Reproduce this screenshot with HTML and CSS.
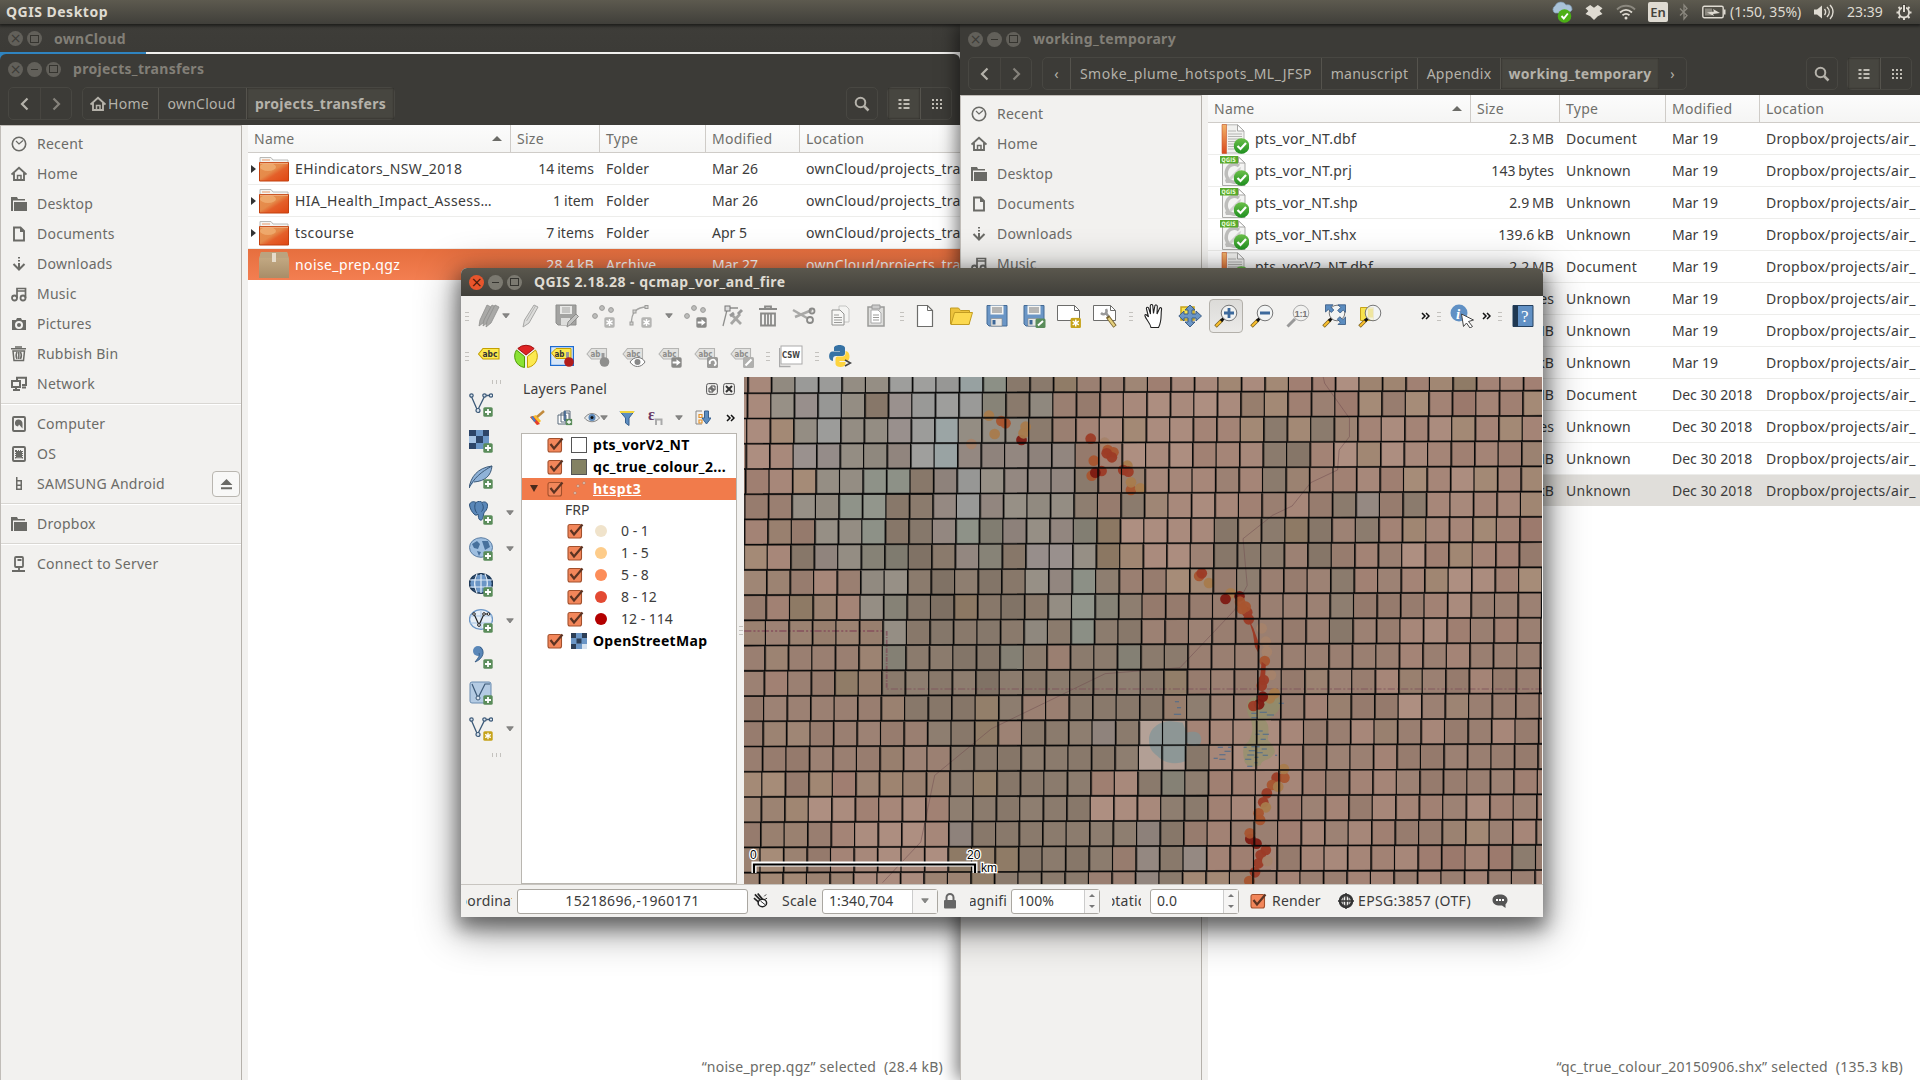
FILE: index.html
```html
<!DOCTYPE html>
<html lang="en">
<head>
<meta charset="utf-8">
<title>QGIS Desktop</title>
<link rel="stylesheet" href="styles.css">
</head>
<body>
<svg class="defs" width="0" height="0">
<defs>
<linearGradient id="gFolder" x1="0" y1="0" x2="1" y2="1"><stop offset="0" stop-color="#e8904f"/><stop offset=".45" stop-color="#e58a4a"/><stop offset=".6" stop-color="#e4602a"/><stop offset="1" stop-color="#e04612"/></linearGradient>
<linearGradient id="gBox" x1="0" y1="0" x2="0" y2="1"><stop offset="0" stop-color="#c9b08a"/><stop offset="1" stop-color="#a88d68"/></linearGradient>
<linearGradient id="gOk" x1="0" y1="0" x2="0" y2="1"><stop offset="0" stop-color="#6cc04a"/><stop offset="1" stop-color="#1d8f1f"/></linearGradient>
<linearGradient id="gOr" x1="0" y1="0" x2="0" y2="1"><stop offset="0" stop-color="#f2b56b"/><stop offset="1" stop-color="#d9481c"/></linearGradient>
<symbol id="recent" viewBox="0 0 16 16"><circle cx="8" cy="8" r="6.7" fill="none" stroke="#6a6a66" stroke-width="1.6"/><path d="M5 5l3 3 4-3.500" fill="none" stroke="#6a6a66" stroke-width="1.2"/></symbol>
<symbol id="home" viewBox="0 0 16 16"><path d="M.5 8.500L8 1.800l7.500 6.700M3 7v7h10V7" fill="none" stroke="currentColor" stroke-width="1.9"/><path d="M6.500 14V9.500h3.500V14" fill="none" stroke="currentColor" stroke-width="1.500"/></symbol>
<symbol id="desktop" viewBox="0 0 16 16"><path d="M0 1h6l1 2h7v1.500H2V15H0z" fill="#6a6a66"/><path d="M3 6h13v9H3z" fill="#6a6a66"/></symbol>
<symbol id="docs" viewBox="0 0 16 16"><path d="M3 1.500h6.500L13 5v9.500H3z" fill="none" stroke="#6a6a66" stroke-width="1.900"/><path d="M9 1v5h5z" fill="#6a6a66"/></symbol>
<symbol id="down" viewBox="0 0 16 16"><path d="M8 1v1.500M8 4v1.500M8 7v6M2.500 8L8 13.500 13.500 8" fill="none" stroke="#6a6a66" stroke-width="2"/></symbol>
<symbol id="music" viewBox="0 0 16 16"><path d="M6 12V2.500h8.500V12M6 5h8" fill="none" stroke="#6a6a66" stroke-width="1.700"/><circle cx="3.500" cy="12" r="2.500" fill="none" stroke="#6a6a66" stroke-width="1.800"/><circle cx="12" cy="12" r="2.500" fill="none" stroke="#6a6a66" stroke-width="1.800"/></symbol>
<symbol id="pics" viewBox="0 0 16 16"><path fill-rule="evenodd" d="M1 4h4l1-2h4l1 2h4v10H1zM8 5a4 4 0 100 8 4 4 0 000-8z" fill="#6a6a66"/><circle cx="8" cy="9" r="2" fill="#6a6a66"/></symbol>
<symbol id="bin" viewBox="0 0 16 16"><path d="M0 2.800h15M4 1h7M2 5h11.500l-1 9.500H3zM6 6c-1 2-1 5 0 7M9.500 6c1 2 1 5 0 7M7.800 6v7" fill="none" stroke="#6a6a66" stroke-width="1.500"/></symbol>
<symbol id="net" viewBox="0 0 16 16"><path d="M1 5h8v6H1zM6 4V1.800h9V9h-4M2 14h7M5 11v3M11 11.500h4" fill="none" stroke="#6a6a66" stroke-width="2"/></symbol>
<symbol id="disk" viewBox="0 0 16 16"><rect x="2" y="1" width="12" height="14" rx="1" fill="none" stroke="#6a6a66" stroke-width="1.900"/><path d="M8 3.500a3.500 3.500 0 00-1 7l1-2 3.500 4V8A4 4 0 008 3.500z" fill="#6a6a66"/></symbol>
<symbol id="chip" viewBox="0 0 16 16"><rect x="2" y="1" width="12" height="14" rx="1" fill="none" stroke="#6a6a66" stroke-width="1.900"/><rect x="5" y="5" width="6" height="6.500" fill="#6a6a66" stroke="#6a6a66" stroke-dasharray="1 1" stroke-width="2"/></symbol>
<symbol id="phone" viewBox="0 0 16 16"><path fill-rule="evenodd" d="M5 1h1.500v3H11v10H5zM6.500 5.500v3h3v-3zM6.500 10v2.500h3V10z" fill="#6a6a66"/></symbol>
<symbol id="server" viewBox="0 0 16 16"><rect x="4" y="1" width="8" height="10" rx="1" fill="none" stroke="#6a6a66" stroke-width="1.800"/><path d="M6.500 4h4M8 11v4M1 15h13" stroke="#6a6a66" stroke-width="1.800"/></symbol>
<symbol id="search" viewBox="0 0 16 16"><circle cx="6.500" cy="6.500" r="4.800" fill="none" stroke="#b5b2aa" stroke-width="2"/><path d="M10 10l4.500 4.500" stroke="#b5b2aa" stroke-width="2.500"/></symbol>
<symbol id="list" viewBox="0 0 16 16"><path d="M2.500 4h3M7.500 4h6M2.500 8h3M7.500 8h6M2.500 12h3M7.500 12h6" stroke="#c0bdb5" stroke-width="2"/></symbol>
<symbol id="grid" viewBox="0 0 16 16"><path d="M3 4h2M7 4h2M11 4h2M3 8h2M7 8h2M11 8h2M3 12h2M7 12h2M11 12h2" stroke="#c0bdb5" stroke-width="2"/></symbol>
<symbol id="left" viewBox="0 0 16 16"><path d="M10.500 2.500L5 8l5.500 5.500" fill="none" stroke="currentColor" stroke-width="2.200"/></symbol>
<symbol id="right" viewBox="0 0 16 16"><path d="M5.500 2.500L11 8l-5.500 5.500" fill="none" stroke="currentColor" stroke-width="2.200"/></symbol>
<symbol id="folder" viewBox="0 0 30 26"><path d="M1 12V1.500h11l2 2.500h15v8" fill="#f4f4f2" stroke="#b9b9b6"/><path d="M3 4h8" stroke="#e89a6a"/><path d="M.5 6.500h29v18.500H.5z" fill="url(#gFolder)" stroke="#c2410f"/><ellipse cx="9" cy="11" rx="8" ry="4" fill="#fbdca6" opacity=".35"/><path d="M1 7.300h28" stroke="#f0b184"/></symbol>
<symbol id="archive" viewBox="0 0 30 28"><path d="M2 1h26l2 7v19H0V8z" fill="url(#gBox)"/><path d="M2 1h26l1.500 6H.5z" fill="#bba37f"/><path d="M13 2h4v9h-4z" fill="#e6dccb"/></symbol>
<symbol id="okdot" viewBox="0 0 16 16"><circle cx="8" cy="8" r="7.800" fill="url(#gOk)"/><path d="M4 8l3 3 5.500-6" fill="none" stroke="#fff" stroke-width="2.200"/></symbol>
<symbol id="dbf" viewBox="0 0 30 30"><path d="M3.500.8h15L25 7v22H3.500z" fill="#f1f1ef" stroke="#b5b5b3"/><path d="M18.500.8V7H25z" fill="#fff" stroke="#a5a5a3"/><path d="M3 .5h4.500v29H3z" fill="url(#gOr)" stroke="#c9562b" stroke-width=".6"/><path d="M9 7h8M9 10h14M9 12.500h14M9 15h14M9 17.500h12M9 20h8M9 22.500h6M9 25h6" stroke="#b4b4b2"/><use href="#okdot" x="14.500" y="14" width="16" height="16"/></symbol>
<symbol id="qfile" viewBox="0 0 30 30"><path d="M3.500 1h16L26 7v22.500H3.500z" fill="#f4f4f3" stroke="#a9a9a7"/><path d="M19.500 1v6H26z" fill="#fff" stroke="#a5a5a3"/><path d="M20 10a8 9 0 10-3 16" fill="none" stroke="#bdbdbb" stroke-width="3.500"/><path d="M10 22l10-10 2-1-1 4-9 9z" fill="#d2d2d0"/><path d="M6 24l3-3 1 4 2 2H7z" fill="#bdbdbb"/><rect x="1" y="0" width="18" height="7.500" fill="#58a82c"/><text x="2.500" y="6" font-size="6.200" font-weight="700" fill="#eaffdd" font-family="DejaVu Sans,sans-serif" textLength="14.500" lengthAdjust="spacingAndGlyphs">QGIS</text><use href="#okdot" x="14.500" y="14" width="16" height="16"/></symbol>
<symbol id="plus" viewBox="0 0 10 10"><rect x=".3" y=".3" width="9.400" height="9.400" rx="1.500" fill="#5a8c5a"/><path d="M5 2v6M2 5h6" stroke="#fff" stroke-width="1.800"/></symbol>
<symbol id="star" viewBox="0 0 10 10"><rect x=".3" y=".3" width="9.400" height="9.400" rx="1.500" fill="currentColor"/><path d="M5 1.800v6.400M2.200 3.400l5.600 3.200M7.800 3.400L2.200 6.600" stroke="#fff" stroke-width="1.300"/></symbol>
<symbol id="garrow" viewBox="0 0 10 10"><rect x=".3" y=".3" width="9.400" height="9.400" rx="1.500" fill="#8a8a88"/><path d="M1.500 5h4" stroke="#fff" stroke-width="2"/><path d="M5 2l3.700 3L5 8z" fill="#fff"/></symbol>
<symbol id="pencils" viewBox="0 0 24 24"><g fill="#a9a9a7" stroke="#8f8f8d" stroke-width=".8"><path d="M2 22l1-6L10 1l4 2L6 19z"/><path d="M6 22l1-6L15 1l4 2-9 16z"/><path d="M9 23l1-6L18 1l4 2-8 16z"/></g></symbol>
<symbol id="pencil" viewBox="0 0 24 24"><path d="M4 23l1.500-7L15 1l4 2-9 16z" fill="#dcdcda" stroke="#a6a6a4"/><path d="M7.500 17L16.500 2" stroke="#b5b5b3"/></symbol>
<symbol id="saveg" viewBox="0 0 24 24"><path d="M1 1h20v20H3l-2-2z" fill="#a3a3a1" stroke="#8d8d8b"/><path d="M5 2h12v8H5z" fill="#e8e8e6"/><path d="M7 4h8M7 6h8M7 8h8" stroke="#a3a3a1"/><path d="M6 14h9v7H6z" fill="#dededc"/><path d="M12 23l1-5 8-8 2.500 2.500-8 8z" fill="#c4c4c2" stroke="#8d8d8b"/></symbol>
<symbol id="dots" viewBox="0 0 24 24"><g fill="#bdbdbb" stroke="#9b9b99"><circle cx="3" cy="12" r="2.400"/><circle cx="10" cy="4" r="2.400"/><circle cx="19" cy="6" r="2.400"/></g><use href="#star" x="12" y="13" width="11" height="11" color="#b5b5b3"/></symbol>
<symbol id="curve" viewBox="0 0 24 24"><path d="M2.500 20C2 8 8 3 18 3" fill="none" stroke="#a5a5a3" stroke-width="1.300"/><g fill="#d5d5d3" stroke="#9b9b99"><rect x="1" y="18" width="3" height="3"/><rect x="4" y="6" width="3" height="3"/><rect x="16" y="1.500" width="3" height="3"/></g><use href="#star" x="12" y="13" width="11" height="11" color="#b5b5b3"/></symbol>
<symbol id="dotsm" viewBox="0 0 24 24"><g fill="#bdbdbb" stroke="#9b9b99"><circle cx="3" cy="12" r="2.400"/><circle cx="10" cy="4" r="2.400"/><circle cx="19" cy="6" r="2.400"/></g><use href="#garrow" x="12" y="13" width="11" height="11"/></symbol>
<symbol id="node" viewBox="0 0 24 24"><path d="M2 22L6 6M7 4h10" stroke="#8f8f8d" stroke-width="1.300"/><rect x="4" y="2" width="5" height="5" fill="#ddd" stroke="#777"/><path d="M10 20l9-10M11 11l9 9" stroke="#a6a6a4" stroke-width="2.800"/><path d="M17 10l4-4M9 12l4-3" stroke="#999" stroke-width="3"/></symbol>
<symbol id="trash" viewBox="0 0 24 24"><path d="M3 5h18M9 4V2.500h6V4M5 9.500h14v12H5zM9 10v11M12 10v11M15 10v11" fill="none" stroke="#8a8a88" stroke-width="1.800"/></symbol>
<symbol id="cut" viewBox="0 0 24 24"><path d="M1 6l14 8M3 13L20 6" stroke="#a9a9a7" stroke-width="2.500"/><circle cx="20" cy="7" r="2.500" fill="none" stroke="#8a8a88" stroke-width="1.800"/><circle cx="18" cy="16" r="3" fill="none" stroke="#8a8a88" stroke-width="1.800"/></symbol>
<symbol id="copy" viewBox="0 0 24 24"><path d="M11 2h7l3 3v13h-10z" fill="#f4f4f2" stroke="#c4c4c2"/><path d="M4 6h8l4 4v11H4z" fill="#f7f7f5" stroke="#929290"/><path d="M6 11h5M6 13.500h8M6 16h8M6 18.500h8" stroke="#9a9a98"/></symbol>
<symbol id="paste" viewBox="0 0 24 24"><path d="M4 3h16v19H4z" fill="#dededc" stroke="#9b9b99" stroke-width="1.500"/><path d="M8 1h8v4H8z" fill="#ccc" stroke="#999"/><path d="M7 6h7l3 3v10H7z" fill="#fff" stroke="#aaa"/><path d="M9 11h6M9 13.500h6M9 16h6" stroke="#9a9a98"/></symbol>
<symbol id="new" viewBox="0 0 24 24"><path d="M4.500 1.500h10l5 5v16h-15z" fill="#fff" stroke="#6d6d6b" stroke-width="1.200"/><path d="M14.500 1.500v5h5" fill="none" stroke="#6d6d6b"/></symbol>
<symbol id="open" viewBox="0 0 24 24"><path d="M1.500 20V4h8l2 2.500h9V20z" fill="#edc33c" stroke="#c29c22"/><path d="M2 20.500L5.500 8.500h18L20 20.500z" fill="#fcd94f" stroke="#c29c22"/></symbol>
<symbol id="save" viewBox="0 0 24 24"><path d="M2 1.500h20v20.500H4l-2-2z" fill="#6b96c6" stroke="#456b94"/><path d="M5.500 1.500h13v9h-13z" fill="#f5f5f3"/><path d="M7 4h10M7 6h10M7 8h10" stroke="#777"/><path d="M6 14.500h11V22H6z" fill="#e8e8e6" stroke="#888" stroke-width=".6"/><path d="M7.500 16h3v4.500h-3z" fill="#3d6696"/></symbol>
<symbol id="saveas" viewBox="0 0 24 24"><use href="#save" width="24" height="24"/><rect x="13.500" y="14.500" width="10" height="9.500" rx="1.500" fill="#5a8c5a"/><path d="M16 21.500l5-4.500" stroke="#fff" stroke-width="2"/></symbol>
<symbol id="layout" viewBox="0 0 24 24"><path d="M.5 1.500h17l5 5v10H.5z" fill="#fff" stroke="#6d6d6b"/><path d="M17.500 1.500v5h5" fill="none" stroke="#6d6d6b"/><use href="#star" x="13" y="13.500" width="11.500" height="11" color="#c6a31a"/></symbol>
<symbol id="wrench" viewBox="0 0 24 24"><path d="M.5 1.500h17l5 5v10H.5z" fill="#fff" stroke="#6d6d6b"/><path d="M17.500 1.500v5h5" fill="none" stroke="#6d6d6b"/><path d="M8 9c3 3 7 0 5-4M13 9l2.500 3.500" fill="none" stroke="#999" stroke-width="2.500"/><path d="M14.500 12.500l7.500 10" stroke="#77632f" stroke-width="4"/><path d="M15.500 14l6 8" stroke="#e5cf7c" stroke-width="2.400"/></symbol>
<symbol id="hand" viewBox="0 0 24 24"><path d="M9 23.500c-1-5-5-8-6-11.500-.5-2 1.500-2 3.500 1L4.500 5c-.5-2 1.800-2.500 2.300-.5L8.500 10 8.300 2c0-2 2.500-2 2.500 0l.7 7.500L12.800 2.200c.3-2 2.700-1.500 2.500.5L15 10l2.500-5.500c.8-1.500 2.500-.8 2 1.200-.8 5 .5 12-3 17.800z" fill="#fff" stroke="#222" stroke-width="1.100"/></symbol>
<symbol id="pan" viewBox="0 0 24 24"><path d="M3 3h13v13H3z" fill="#fbe34c" stroke="#c6a31a" stroke-width="1.500"/><path d="M12 1l5 5h-3v4h4V7l5.500 5-5.500 5v-3h-4v4h3l-5 5-5-5h3v-4H6v3L.8 12 6 7v3h4V6H7z" fill="#6b96c6" stroke="#33557d" stroke-width=".9"/></symbol>
<symbol id="lens" viewBox="0 0 24 24"><path d="M1.500 22.500L8 16" stroke="#7d6420" stroke-width="3.600"/><path d="M2 22l5-5" stroke="#fbc02d" stroke-width="2"/><path d="M7 17l3-3" stroke="#111" stroke-width="3"/><circle cx="15" cy="9" r="7.800" fill="#f2f4f4" fill-opacity=".85" stroke="#777"/></symbol>
<symbol id="zin" viewBox="0 0 24 24"><use href="#lens" width="24" height="24"/><path d="M15 4v10M10 9h10" stroke="#3c699c" stroke-width="2.800"/></symbol>
<symbol id="zout" viewBox="0 0 24 24"><use href="#lens" width="24" height="24"/><path d="M10 9h10" stroke="#3c699c" stroke-width="2.800"/></symbol>
<symbol id="z11" viewBox="0 0 24 24"><path d="M1.500 22.500L9 15" stroke="#999" stroke-width="3"/><circle cx="15" cy="9" r="7.800" fill="#f1f1ef" stroke="#aaa"/><text x="8.500" y="12.500" font-size="9.500" font-weight="700" fill="#777" font-family="Liberation Sans,sans-serif" textLength="13">1:1</text></symbol>
<symbol id="zfull" viewBox="0 0 24 24"><use href="#lens" width="24" height="24"/><g fill="#5c8dc0" stroke="#33557d" stroke-width=".8"><path d="M3.500.800h7.500L8.800 3l3 3-2.500 2.500-3-3L3.500 8zM23.500.800v7.500L21.200 6l-3 3-2.500-2.500 3-3L16 .800zM23.500 20.500H16l2.300-2.300-3-3 2.500-2.500 3 3 2.700-2.700z"/></g></symbol>
<symbol id="zsel" viewBox="0 0 24 24"><path d="M2.500 3.500h13v13h-13z" fill="#f7e34c" stroke="#c6a31a"/><use href="#lens" width="24" height="24"/><path d="M10 4.500h5v9h-5z" fill="#efe6a0"/></symbol>
<symbol id="info" viewBox="0 0 24 24"><circle cx="9" cy="9" r="8.500" fill="#6090c4"/><text x="6" y="14.500" font-size="15" font-weight="700" font-style="italic" fill="#fff" font-family="Liberation Serif,serif">i</text><path d="M11.500 10l12 6-5 1.500 4 5-2.500 1.500-3.500-5-3 3.500z" fill="#fff" stroke="#444"/></symbol>
<symbol id="help" viewBox="0 0 24 24"><path d="M2 1.500h20v21H2z" fill="#6190c4" stroke="#25405f"/><path d="M2 1.500h5v21H2z" fill="#1f3852"/><text x="10" y="18" font-size="17" fill="#fff" font-family="Liberation Serif,serif">?</text></symbol>
<symbol id="tag" viewBox="0 0 24 24"><path d="M1.500 10L6 4.500h16v10.500H6z" fill="#fce94f" stroke="#c4a000" stroke-width="1.100"/><text x="5.500" y="13" font-size="9" font-weight="700" fill="#333" font-family="DejaVu Sans,sans-serif" textLength="15" lengthAdjust="spacingAndGlyphs">abc</text></symbol>
<symbol id="tagg" viewBox="0 0 24 24"><path d="M1 10l4.500-5.500h15v10.500h-15z" fill="#e2e2e0" stroke="#b5b5b3" stroke-width="1.100"/><text x="4.500" y="13" font-size="9" font-weight="700" fill="#8d8d8b" font-family="DejaVu Sans,sans-serif" textLength="14" lengthAdjust="spacingAndGlyphs">abc</text></symbol>
<symbol id="pie" viewBox="0 0 24 24"><path d="M12 11L3.800 4.500a12 12 0 0116.400 0z" fill="#e02424" stroke="#a01010"/><path d="M10.500 12.500v11C1 22-1.500 12 2.500 6z" fill="#8ae234" stroke="#4e9a06"/><path d="M13.500 12.500v11C23 22 25.500 12 21.500 6z" fill="#fce94f" stroke="#c4a000"/></symbol>
<symbol id="tagpin" viewBox="0 0 24 24"><rect x=".6" y="2.600" width="22.800" height="18.800" fill="#d7e6f7" stroke="#1c6bd0" stroke-width="1.200"/><path d="M1.500 9L6 4.500h15v10H6z" fill="#fce94f" stroke="#c4a000"/><text x="4.500" y="12.500" font-size="9" font-weight="700" fill="#333" font-family="DejaVu Sans,sans-serif" textLength="10" lengthAdjust="spacingAndGlyphs">ab</text><path d="M17.500 8v8" stroke="#999" stroke-width="3"/><circle cx="19" cy="18" r="4.800" fill="#b11c1c"/></symbol>
<symbol id="tag2" viewBox="0 0 24 24"><path d="M1 10l4.500-5.500h15v10.500h-15z" fill="#e2e2e0" stroke="#b5b5b3" stroke-width="1.100"/><text x="4.500" y="13" font-size="9" font-weight="700" fill="#8d8d8b" font-family="DejaVu Sans,sans-serif" textLength="10" lengthAdjust="spacingAndGlyphs">ab</text><path d="M17 9v8" stroke="#999" stroke-width="3"/><circle cx="18.500" cy="18" r="4.800" fill="#8f8f8d"/></symbol>
<symbol id="tag3" viewBox="0 0 24 24"><use href="#tagg" width="24" height="24"/><path d="M8 18c4-6 12-6 15 0-4 6-11 6-15 0z" fill="#fff" stroke="#777"/><circle cx="15.500" cy="18" r="3" fill="#888"/></symbol>
<symbol id="tag4" viewBox="0 0 24 24"><use href="#tagg" width="24" height="24"/><use href="#garrow" x="13" y="13" width="11" height="11"/></symbol>
<symbol id="tag5" viewBox="0 0 24 24"><use href="#tagg" width="24" height="24"/><rect x="13" y="13" width="11" height="11" rx="1.500" fill="#9a9a98"/><path d="M16 20a3 3 0 114 1.500" fill="none" stroke="#fff" stroke-width="1.800"/></symbol>
<symbol id="tag6" viewBox="0 0 24 24"><use href="#tagg" width="24" height="24"/><rect x="13" y="13" width="11" height="11" rx="1.500" fill="#b0b0ae"/><path d="M15.500 21.500l6-6" stroke="#fff" stroke-width="2.200"/></symbol>
<symbol id="csw" viewBox="0 0 24 24"><path d="M.5 4v18.500h11" fill="none" stroke="#aaa" stroke-width="1.400"/><rect x="2" y="2" width="21" height="18" fill="#fff" stroke="#aaa"/><text x="3" y="14" font-size="9" font-weight="700" fill="#444" font-family="DejaVu Sans,sans-serif" textLength="18" lengthAdjust="spacingAndGlyphs">CSW</text></symbol>
<symbol id="python" viewBox="0 0 24 24"><path d="M6 7V4c0-4 11-4 11 0v5c0 2-1 3-3 3H8c-2 0-3 1-3 3v2c-5 0-5-9-1-9.500h8V7z" fill="#3672a4"/><path d="M17.500 7c5 0 5 9 2 10h-8v1h6v2c0 4-10 4-10 0v-5c0-2 1-2.500 3-2.500h4c2 0 3-1.500 3-3.500z" fill="#fdd43f"/><path d="M17 16l5.500 3-5.500 3" fill="none" stroke="#444" stroke-width="1.500"/></symbol>
<symbol id="vec" viewBox="0 0 24 24"><path d="M2 2.500l6.500 15L16 2.500h6" fill="none" stroke="#3d5a78" stroke-width="1.300"/><g fill="#dce6f0" stroke="#3d5a78" stroke-width="1.200"><circle cx="2.500" cy="2.500" r="1.700"/><circle cx="15.500" cy="2.500" r="1.700"/><circle cx="22" cy="2.500" r="1.700"/><circle cx="9" cy="17.500" r="2"/></g></symbol>
<symbol id="v1" viewBox="0 0 24 24"><use href="#vec" width="24" height="24"/><use href="#plus" x="14" y="14" width="10" height="10"/></symbol>
<symbol id="v2" viewBox="0 0 24 24"><path d="M0 1h20v19H0z" fill="#6b96c6"/><path d="M0 1h7v6H0zM14 1h6v6h-6zM7 7h7v7H7zM0 14h7v6H0z" fill="#2c4568"/><path d="M0 7h7v7H0z" fill="#a8c5e4"/><use href="#plus" x="14" y="14" width="10" height="10"/></symbol>
<symbol id="v3" viewBox="0 0 24 24"><path d="M0 23C2 12 8 3 23 1c-1 10-7 15-18 16" fill="#8fb2d8" stroke="#3d5a78"/><path d="M0 23C5 13 12 7 23 1" fill="none" stroke="#3d5a78"/><use href="#plus" x="14" y="14" width="10" height="10"/></symbol>
<symbol id="v4" viewBox="0 0 24 24"><path d="M.5 4C1 .5 5 0 7 1.500 9 0 12 0 13 1.500c3-1.500 6 0 5.500 4-.5 3-2 5-3.500 6l-1 5c-.5 3.500-4 3.500-4.500 0L9 13c-1 1.500-3 1.500-4 0C3 11 1 8 .5 4z" fill="#5a87b8" stroke="#2d527a"/><path d="M6.500 2c-1.500 4-.5 8 1.500 10M13 2.500c2 3 1.500 6-.5 8" fill="none" stroke="#2d527a"/><use href="#plus" x="14" y="14" width="10" height="10"/></symbol>
<symbol id="v5" viewBox="0 0 24 24"><ellipse cx="12" cy="10.500" rx="11.500" ry="9.800" fill="#9fbfe0" stroke="#5a7da3"/><path d="M3 7l5-3 3 3-2 5-4-1zM13 4h6l2 6-5 3zM8 14l4 1-2 4z" fill="#47709c"/><use href="#plus" x="14" y="14" width="10" height="10"/></symbol>
<symbol id="v6" viewBox="0 0 24 24"><ellipse cx="12" cy="10.500" rx="11.500" ry="9.800" fill="#6b96c6" stroke="#1f3a58" stroke-width="1.500"/><path d="M2 6h5l1-4zM2 15h5l1 4zM22 6h-5l-1-4z" fill="#1f3a58"/><path d="M1 7h22M1 14h22M12 1v19M8 1c-3 6-3 13 0 19M16 1c3 6 3 13 0 19" fill="none" stroke="#dfeaf5" stroke-width="1.200"/><use href="#plus" x="14" y="14" width="10" height="10"/></symbol>
<symbol id="v7" viewBox="0 0 24 24"><ellipse cx="12" cy="10.500" rx="11.500" ry="9.800" fill="#e6eef6" stroke="#6b96c6" stroke-width="1.300"/><path d="M1 7h22M1 14h22M12 1v19" stroke="#a8c5e4"/><path d="M5 5l5 11 5-11h5" fill="none" stroke="#222" stroke-width="1.200"/><g fill="#fff" stroke="#222"><circle cx="5" cy="5" r="1.300"/><circle cx="10" cy="16" r="1.400"/><circle cx="15" cy="5" r="1.300"/><circle cx="19.500" cy="5" r="1.300"/></g><use href="#plus" x="14" y="14" width="10" height="10"/></symbol>
<symbol id="v8" viewBox="0 0 24 24"><circle cx="9" cy="6" r="5" fill="#5a87b8"/><path d="M11 2c6 4 3 12-5 15 4-5 5-7 4-9" fill="#5a87b8" stroke="#2d527a" stroke-width=".8"/><use href="#plus" x="14" y="14" width="10" height="10"/></symbol>
<symbol id="v9" viewBox="0 0 24 24"><rect x="1" y="1" width="21" height="21" rx="2" fill="#b4cbe3" stroke="#6a8cb0"/><path d="M3 3l6 14L16 3h5" fill="none" stroke="#3d5a78" stroke-width="1.200"/><circle cx="9" cy="17" r="2" fill="#dce6f0" stroke="#3d5a78"/><use href="#plus" x="14" y="14" width="10" height="10"/></symbol>
<symbol id="v10" viewBox="0 0 24 24"><use href="#vec" width="24" height="24"/><use href="#star" x="14" y="14" width="10" height="10" color="#c6a31a"/></symbol>
<symbol id="drop" viewBox="0 0 9 6"><path d="M.800.500h7.400L4.500 5.200z" fill="#888" stroke="#6f6f6d" stroke-width=".8"/></symbol>
<symbol id="check" viewBox="0 0 17 16"><rect x="1" y="1.500" width="13.500" height="13.500" rx="2" fill="#f2865a" stroke="#a3502c" stroke-width="1.100"/><path d="M3.500 7l3.500 4.500L15.500 1.500" fill="none" stroke="#5c3322" stroke-width="2.200"/></symbol>
<symbol id="more" viewBox="0 0 9 8"><path d="M1 1l3 3-3 3M5 1l3 3-3 3" fill="none" stroke="#111" stroke-width="1.500"/></symbol>
<symbol id="brush" viewBox="0 0 16 16"><path d="M1 7l6-2 5 6-4 4z" fill="#fbc02d"/><path d="M1 7l3-1 7 8-3 1z" fill="#e23c2e"/><path d="M3 6.500l3 5" stroke="#3b82d0" stroke-width="2"/><path d="M8 7l7-6" stroke="#c18a3c" stroke-width="2.500"/></symbol>
<symbol id="addgrp" viewBox="0 0 16 16"><path d="M1 5h8v9H1zM4 3h8v9H4zM7 1h6v9H7z" fill="#fff" stroke="#5a6a7a"/><path d="M8 1v10" stroke="#38618f" stroke-width="1.500"/><use href="#plus" x="8.500" y="8.500" width="7" height="7"/></symbol>
<symbol id="eye" viewBox="0 0 16 16"><path d="M.500 8c4-6 11-6 15 0-4 5-11 5-15 0z" fill="#e5e9ec" stroke="#888"/><circle cx="8" cy="7.500" r="3.500" fill="#5a87b8"/><circle cx="8" cy="7.500" r="1.500" fill="#111"/></symbol>
<symbol id="funnel" viewBox="0 0 16 16"><path d="M1 1.500h14L10 8v7.500L6.500 13V8z" fill="#5c8dc0" stroke="#38618f"/><path d="M1 1h14v2H1z" fill="#f0d43c"/></symbol>
<symbol id="eps" viewBox="0 0 16 16"><text x="0" y="10" font-size="16" font-weight="700" fill="#6b3a66" font-family="Liberation Serif,serif">ε</text><path d="M8 15V9.500h5.500V15" fill="none" stroke="#aaa" stroke-width="2"/></symbol>
<symbol id="expand" viewBox="0 0 16 16"><path d="M7 1H1v13h6" fill="none" stroke="#888"/><path d="M4 4.500h3v3H4zM4 10h3v3H4z" fill="none" stroke="#e6952e" stroke-width="1.200"/><path d="M9.500 1h4v7H16l-4.500 6L7 8h2.500z" fill="#5c8dc0" stroke="#38618f"/></symbol>
</defs>
</svg>

<section class="window owncloud">
  <header class="titlebar"><b class="wb">×</b><b class="wb sq"></b><span>ownCloud</span></header>
  <div class="progress"></div>
</section>

<section class="window files left-files">
  <header class="titlebar"><b class="wb">×</b><b class="wb mn"></b><b class="wb sq"></b><span>projects_transfers</span></header>
  <nav class="bar">
    <div class="group nav"><button><svg><use href="#left"/></svg></button><button class="dim"><svg><use href="#right"/></svg></button></div>
    <div class="group path lp"><button><svg><use href="#home"/></svg>Home</button><button>ownCloud</button><button class="on">projects_transfers</button></div>
    <div class="group find"><button><svg><use href="#search"/></svg></button></div>
    <div class="group views"><button class="on"><svg><use href="#list"/></svg></button><button><svg><use href="#grid"/></svg></button></div>
  </nav>
  <div class="body">
    <aside class="places">
      <a><svg><use href="#recent"/></svg>Recent</a>
      <a><svg><use href="#home"/></svg>Home</a>
      <a><svg><use href="#desktop"/></svg>Desktop</a>
      <a><svg><use href="#docs"/></svg>Documents</a>
      <a><svg><use href="#down"/></svg>Downloads</a>
      <a><svg><use href="#music"/></svg>Music</a>
      <a><svg><use href="#pics"/></svg>Pictures</a>
      <a><svg><use href="#bin"/></svg>Rubbish Bin</a>
      <a><svg><use href="#net"/></svg>Network</a>
      <hr>
      <a><svg><use href="#disk"/></svg>Computer</a>
      <a><svg><use href="#chip"/></svg>OS</a>
      <a><svg><use href="#phone"/></svg>SAMSUNG Android<button class="eject"><svg viewBox="0 0 14 12"><path d="M7 0l6.500 6.500H.500zM1 9h12v2.200H1z" fill="#6a6a66"/></svg></button></a>
      <hr>
      <a><svg><use href="#desktop"/></svg>Dropbox</a>
      <hr>
      <a><svg><use href="#server"/></svg>Connect to Server</a>
    </aside>
    <main class="list">
      <div class="row head"><span>Name<i class="sort"></i></span><span>Size</span><span>Type</span><span>Modified</span><span>Location</span></div>
      <div class="row"><span><i class="exp"></i><svg><use href="#folder"/></svg><em>EHindicators_NSW_2018</em></span><span>14 items</span><span>Folder</span><span>Mar 26</span><span>ownCloud/projects_tra</span></div>
      <div class="row"><span><i class="exp"></i><svg><use href="#folder"/></svg><em>HIA_Health_Impact_Assess…</em></span><span>1 item</span><span>Folder</span><span>Mar 26</span><span>ownCloud/projects_tra</span></div>
      <div class="row"><span><i class="exp"></i><svg><use href="#folder"/></svg><em>tscourse</em></span><span>7 items</span><span>Folder</span><span>Apr 5</span><span>ownCloud/projects_tra</span></div>
      <div class="row sel"><span><i></i><svg><use href="#archive"/></svg><em>noise_prep.qgz</em></span><span>28.4 kB</span><span>Archive</span><span>Mar 27</span><span>ownCloud/projects_tra</span></div>
      <footer>“noise_prep.qgz” selected&nbsp; (28.4 kB)</footer>
    </main>
  </div>
</section>

<section class="window files right-files">
  <header class="titlebar"><b class="wb">×</b><b class="wb mn"></b><b class="wb sq"></b><span>working_temporary</span></header>
  <nav class="bar">
    <div class="group nav"><button><svg><use href="#left"/></svg></button><button class="dim"><svg><use href="#right"/></svg></button></div>
    <div class="group path rp"><button class="tiny">‹</button><button>Smoke_plume_hotspots_ML_JFSP</button><button>manuscript</button><button>Appendix</button><button class="on">working_temporary</button><button class="tiny">›</button></div>
    <div class="group find"><button><svg><use href="#search"/></svg></button></div>
    <div class="group views"><button class="on"><svg><use href="#list"/></svg></button><button><svg><use href="#grid"/></svg></button></div>
  </nav>
  <div class="body">
    <aside class="places">
      <a><svg><use href="#recent"/></svg>Recent</a>
      <a><svg><use href="#home"/></svg>Home</a>
      <a><svg><use href="#desktop"/></svg>Desktop</a>
      <a><svg><use href="#docs"/></svg>Documents</a>
      <a><svg><use href="#down"/></svg>Downloads</a>
      <a><svg><use href="#music"/></svg>Music</a>
    </aside>
    <main class="list">
      <div class="row head"><span>Name<i class="sort"></i></span><span>Size</span><span>Type</span><span>Modified</span><span>Location</span></div>
      <div class="row"><span><i></i><svg><use href="#dbf"/></svg><em>pts_vor_NT.dbf</em></span><span>2.3 MB</span><span>Document</span><span>Mar 19</span><span>Dropbox/projects/air_</span></div>
      <div class="row"><span><i></i><svg><use href="#qfile"/></svg><em>pts_vor_NT.prj</em></span><span>143 bytes</span><span>Unknown</span><span>Mar 19</span><span>Dropbox/projects/air_</span></div>
      <div class="row"><span><i></i><svg><use href="#qfile"/></svg><em>pts_vor_NT.shp</em></span><span>2.9 MB</span><span>Unknown</span><span>Mar 19</span><span>Dropbox/projects/air_</span></div>
      <div class="row"><span><i></i><svg><use href="#qfile"/></svg><em>pts_vor_NT.shx</em></span><span>139.6 kB</span><span>Unknown</span><span>Mar 19</span><span>Dropbox/projects/air_</span></div>
      <div class="row"><span><i></i><svg><use href="#dbf"/></svg><em>pts_vorV2_NT.dbf</em></span><span>2.2 MB</span><span>Document</span><span>Mar 19</span><span>Dropbox/projects/air_</span></div>
      <div class="row"><span></span><span>bytes</span><span>Unknown</span><span>Mar 19</span><span>Dropbox/projects/air_</span></div>
      <div class="row"><span></span><span>MB</span><span>Unknown</span><span>Mar 19</span><span>Dropbox/projects/air_</span></div>
      <div class="row"><span></span><span>kB</span><span>Unknown</span><span>Mar 19</span><span>Dropbox/projects/air_</span></div>
      <div class="row"><span></span><span>MB</span><span>Document</span><span>Dec 30 2018</span><span>Dropbox/projects/air_</span></div>
      <div class="row"><span></span><span>bytes</span><span>Unknown</span><span>Dec 30 2018</span><span>Dropbox/projects/air_</span></div>
      <div class="row"><span></span><span>MB</span><span>Unknown</span><span>Dec 30 2018</span><span>Dropbox/projects/air_</span></div>
      <div class="row idle"><span></span><span>kB</span><span>Unknown</span><span>Dec 30 2018</span><span>Dropbox/projects/air_</span></div>
      <footer>“qc_true_colour_20150906.shx” selected&nbsp; (135.3 kB)</footer>
    </main>
  </div>
</section>

<section class="window qgis">
  <header class="titlebar"><b class="wb hot">×</b><b class="wb mn"></b><b class="wb sq"></b><span>QGIS 2.18.28 - qcmap_vor_and_fire</span></header>
  <div class="tools row1">
    <i class="grip"></i><svg><use href="#pencils"/></svg><svg class="drop"><use href="#drop"/></svg><svg><use href="#pencil"/></svg><svg><use href="#saveg"/></svg><svg><use href="#dots"/></svg><svg><use href="#curve"/></svg><svg class="drop"><use href="#drop"/></svg><svg><use href="#dotsm"/></svg><svg><use href="#node"/></svg><svg><use href="#trash"/></svg><svg><use href="#cut"/></svg><svg><use href="#copy"/></svg><svg><use href="#paste"/></svg><i class="grip"></i><svg><use href="#new"/></svg><svg><use href="#open"/></svg><svg><use href="#save"/></svg><svg><use href="#saveas"/></svg><svg><use href="#layout"/></svg><svg><use href="#wrench"/></svg><i class="grip"></i><svg><use href="#hand"/></svg><svg><use href="#pan"/></svg><button class="pressed"><svg><use href="#zin"/></svg></button><svg><use href="#zout"/></svg><svg><use href="#z11"/></svg><svg><use href="#zfull"/></svg><svg><use href="#zsel"/></svg><svg class="more"><use href="#more"/></svg><i class="grip"></i><svg><use href="#info"/></svg><svg class="more"><use href="#more"/></svg><i class="grip"></i><svg><use href="#help"/></svg>
  </div>
  <div class="tools row2">
    <i class="grip"></i><svg><use href="#tag"/></svg><svg><use href="#pie"/></svg><svg><use href="#tagpin"/></svg><svg><use href="#tag2"/></svg><svg><use href="#tag3"/></svg><svg><use href="#tag4"/></svg><svg><use href="#tag5"/></svg><svg><use href="#tag6"/></svg><i class="grip"></i><svg><use href="#csw"/></svg><i class="grip"></i><svg><use href="#python"/></svg>
  </div>
  <div class="work">
    <div class="side">
      <i class="hgrip"></i>
      <div><svg><use href="#v1"/></svg></div>
      <div><svg><use href="#v2"/></svg></div>
      <div><svg><use href="#v3"/></svg></div>
      <div><svg><use href="#v4"/></svg><svg class="drop"><use href="#drop"/></svg></div>
      <div><svg><use href="#v5"/></svg><svg class="drop"><use href="#drop"/></svg></div>
      <div><svg><use href="#v6"/></svg></div>
      <div><svg><use href="#v7"/></svg><svg class="drop"><use href="#drop"/></svg></div>
      <div><svg><use href="#v8"/></svg></div>
      <div><svg><use href="#v9"/></svg></div>
      <div><svg><use href="#v10"/></svg><svg class="drop"><use href="#drop"/></svg></div>
      <i class="hgrip"></i>
    </div>
    <div class="panel">
      <div class="ptitle"><span>Layers Panel</span><svg viewBox="0 0 12 12"><rect x=".600" y=".600" width="10.800" height="10.800" rx="2" fill="none" stroke="#555"/><path d="M5 3h4v4H5zM3 5h4v4H3z" fill="none" stroke="#444"/></svg><svg viewBox="0 0 12 12"><rect x=".600" y=".600" width="10.800" height="10.800" rx="2" fill="none" stroke="#555"/><path d="M3 3l6 6M9 3L3 9" stroke="#333" stroke-width="2"/></svg></div>
      <div class="ptools"><svg><use href="#brush"/></svg><svg><use href="#addgrp"/></svg><svg><use href="#eye"/></svg><svg class="drop"><use href="#drop"/></svg><svg><use href="#funnel"/></svg><svg><use href="#eps"/></svg><svg class="drop"><use href="#drop"/></svg><svg><use href="#expand"/></svg><svg class="more"><use href="#more"/></svg></div>
      <div class="tree">
        <div class="lay"><svg class="ck"><use href="#check"/></svg><i class="sw"></i><b>pts_vorV2_NT</b></div>
        <div class="lay"><svg class="ck"><use href="#check"/></svg><i class="sw olive"></i><b>qc_true_colour_2...</b></div>
        <div class="lay act"><i class="open"></i><svg class="ck"><use href="#check"/></svg><svg class="sw3" viewBox="0 0 16 16"><g fill="#f3d9c8" stroke="#a8705a" stroke-width=".600"><circle cx="4" cy="12" r="1.300"/><circle cx="7" cy="5" r="1.300"/><circle cx="13" cy="2" r="1.300"/></g></svg><b><u>htspt3</u></b></div>
        <div class="frp">FRP</div>
        <div class="cls"><svg class="ck"><use href="#check"/></svg><i class="c1"></i>0 - 1</div>
        <div class="cls"><svg class="ck"><use href="#check"/></svg><i class="c2"></i>1 - 5</div>
        <div class="cls"><svg class="ck"><use href="#check"/></svg><i class="c3"></i>5 - 8</div>
        <div class="cls"><svg class="ck"><use href="#check"/></svg><i class="c4"></i>8 - 12</div>
        <div class="cls"><svg class="ck"><use href="#check"/></svg><i class="c5"></i>12 - 114</div>
        <div class="lay"><svg class="ck"><use href="#check"/></svg><svg class="sw3" viewBox="0 0 16 16"><path d="M0 0h16v16H0z" fill="#6b96c6"/><path d="M0 0h5v5H0zM11 0h5v5h-5zM5.500 5.500h5v5h-5zM0 11h5v5H0z" fill="#2c3e56"/><path d="M11 11h5v5h-5z" fill="#d6e2ee"/></svg><b>OpenStreetMap</b></div>
      </div>
    </div>
    <div class="split"><i class="grip"></i></div>
    <svg class="map" viewBox="744 377 798 507">
      <g id="cells"></g>
      <g transform="translate(740 375) scale(.5165 .33333)">
        <path d="M792 1100c-2-40 20-60 40-62l25 5 8 30c10-5 28-5 28 20s-15 25-28 10l-2 55c-20 12-40 8-55-15-12-15-15-25-16-43z" fill="#7b9498" opacity=".65"/>
        <path d="M985 975c20-25 60-25 62 5s-20 50-30 55c10 20 5 40 5 60 12 20 18 35 10 45-10 20-20 10-24 30-15 10-30 5-32-15s-5-40 8-55c10-25 10-45 4-70-8-15-8-40-3-55z" fill="#8f9268" opacity=".6"/>
        <path class="road" d="M1129 5l3 20 48 105v55l-20 40-3 60-52 38-36 70-38 28-57 70 8 140-25 75-105 172-145 18-220 165-110 140-27 200-74 122"/>
        <path d="M8 768h270" stroke="#85505c" stroke-width="4.500" stroke-dasharray="14 4 4 4 4 4" fill="none"/>
        <path d="M284 768v174H1553" stroke="#80525c" stroke-width="3.400" stroke-dasharray="14 4 4 4" fill="none" opacity=".85"/>
        <g id="spots"></g>
        <path d="M842 980h8M846 998h8M840 1018h14M925 1117h10M945 1117h6M938 1129h12M928 1139h12M917 1150h8M928 1153h12M990 1015h10M1006 1012h14M1020 1020h14M1043 985h10M998 1078h8M1012 1078h12M1008 1093h10M975 1117h6M990 1115h16M985 1127h12M1010 1122h10M982 1140h14M1000 1133h12M1012 1141h10M1036 1141h4M978 1153h12M996 1147h8M982 1174h10M996 1163h6M990 1028h12M1004 1068h8" stroke="#4d6b8c" stroke-width="2.800" fill="none"/>
      </g>
      <g id="lines"></g>
      <path d="M754 873v-9h221v9" fill="none" stroke="#fff" stroke-width="5"/>
      <path d="M754 873v-8.500h221v8.500" fill="none" stroke="#000" stroke-width="2.200"/>
      <g class="halo"><text x="750" y="859">0</text><text x="967" y="859">20</text><text x="981" y="872">km</text></g>
    </svg>
  </div>
  <div class="status">
    <span class="clip co">Coordinate:</span>
    <span class="field pos">15218696,-1960171</span>
    <svg class="mouse" viewBox="0 0 16 16"><path d="M2 1l6 6M5 0l5 6M1 5l6 5" stroke="#222" stroke-width="1.800"/><ellipse cx="10" cy="10" rx="4.500" ry="4" fill="#fff" stroke="#222" stroke-width="1.600"/><path d="M8 8l5 4M12 3l2-2M13 6l2-1" stroke="#222"/></svg>
    <span class="sc">Scale</span>
    <span class="field combo">1:340,704<i><svg class="drop"><use href="#drop"/></svg></i></span>
    <svg class="lock" viewBox="0 0 14 16"><path d="M3.500 8V4.500a3.500 3.500 0 017 0V8" fill="none" stroke="#666" stroke-width="2"/><rect x="1" y="7" width="12" height="8.500" rx="1" fill="#666"/></svg>
    <span class="clip ma">Magnifier</span>
    <span class="field spin">100%<i></i></span>
    <span class="clip ro">Rotation</span>
    <span class="field spin">0.0<i></i></span>
    <svg class="ck"><use href="#check"/></svg>
    <span class="re">Render</span>
    <svg class="crs" viewBox="0 0 16 16"><circle cx="8" cy="8" r="6" fill="none" stroke="#333" stroke-width="2.600"/><ellipse cx="8" cy="8" rx="3" ry="6" fill="none" stroke="#444"/><path d="M0 8h16M8 0v16" stroke="#333" stroke-width="1.500"/></svg>
    <span class="ep">EPSG:3857 (OTF)</span>
    <svg class="msg" viewBox="0 0 16 16"><path d="M8 1.500c4 0 7.500 2 7.500 5.500 0 2-1 3.500-2 4.300V15l-3.500-2.600C4 13 .5 11 .5 7S4 1.500 8 1.500z" fill="#555"/><path d="M4 7h2M7 7h2M10 7h2" stroke="#fff" stroke-width="1.800"/></svg>
  </div>
</section>

<header class="top">
  <strong>QGIS Desktop</strong>
  <svg class="i-cloud" viewBox="0 0 22 24"><path d="M4 13a4 4 0 010-7c2-5 9-5 11-1 4-1 6 1 6 5l-3 3z" fill="#a9c2d8" stroke="#7e99b3" stroke-width=".7"/><circle cx="13.500" cy="16" r="6.800" fill="#4caf16"/><path d="M10.500 16l2.300 2.500 4-5" fill="none" stroke="#fff" stroke-width="1.900"/></svg>
  <svg class="i-box" viewBox="0 0 18 18"><path d="M5 1l4 3 4-3 5 3.500-3 3 3 3L13 13l-4 4-4-4-5-2.500 3-3-3-3z" fill="#dfdbd2"/></svg>
  <svg class="i-wifi" viewBox="0 0 20 16"><path d="M1 5.500c5-5 13-5 18 0" stroke="#8b887f" stroke-width="1.800" fill="none"/><path d="M4 8.500c4-3.500 8-3.500 12 0M6.500 11.300c2.500-2 4.500-2 7 0" stroke="#dfdbd2" stroke-width="1.800" fill="none"/><circle cx="10" cy="14" r="1.500" fill="#dfdbd2"/></svg>
  <b class="i-en">En</b>
  <svg class="i-bt" viewBox="0 0 10 16"><path d="M1 4.500l7 7L5 15V1l3 3.500-7 7" fill="none" stroke="#8b887f" stroke-width="1.300"/></svg>
  <svg class="i-bat" viewBox="0 0 24 14"><rect x=".800" y="1.300" width="20.400" height="11.400" rx="1.500" fill="none" stroke="#dfdbd2" stroke-width="1.400"/><path d="M22 4.500h1.500v5H22z" fill="#dfdbd2"/><path d="M3 3.500h7v7H3z" fill="#8b887f"/><path d="M5 7.500l7-1-1-2.500 7 4-7 1 1 2z" fill="#dfdbd2"/></svg>
  <span class="t-bat">(1:50, 35%)</span>
  <svg class="i-vol" viewBox="0 0 20 16"><path d="M0 5.500h3l5-4v13l-5-4H0z" fill="#dfdbd2"/><path d="M10.500 5c1.500 2 1.500 4 0 6M13 3c3 3 3 7 0 10M16 1c4 4 4 10 0 14" fill="none" stroke="#dfdbd2" stroke-width="1.400"/></svg>
  <span class="t-time">23:39</span>
  <svg class="i-gear" viewBox="0 0 16 16"><circle cx="8" cy="8.500" r="5" fill="none" stroke="#dfdbd2" stroke-width="1.800"/><path d="M8 0v8" stroke="#45433c" stroke-width="4"/><path d="M8 1v7M2.500 3l2 2M13.500 3l-2 2M.5 8.500H3M13 8.500h2.500M2.500 14l2-2M13.500 14l-2-2M8 13v3" stroke="#dfdbd2" stroke-width="2"/></svg>
</header>
<script src="map.js"></script>
</body>
</html>
```
FILE: styles.css
```css
* { box-sizing: border-box; }
body { margin: 0; width: 1920px; height: 1080px; overflow: hidden; position: relative; background: #3c3b37; color: #3c3c3c; font: 14px/20px "Noto Sans", "Open Sans", sans-serif; }
svg { display: block; flex: none; overflow: visible; }
button { font: inherit; color: inherit; letter-spacing: inherit; border: 0; background: none; padding: 0; }
em { font-style: normal; letter-spacing: .4px; }
.defs { position: absolute; }

.top { position: absolute; left: 0; top: 0; width: 1920px; height: 24px; display: flex; align-items: center; padding: 0 8px 0 6px; background: linear-gradient(#5d5a4f, #403f3a); color: #dfdbd2; box-shadow: 0 1px 3px 1px rgba(0,0,0,.55); }
.top strong { letter-spacing: .5px; margin-right: auto; }
.i-cloud { width: 22px; height: 24px; margin-right: 12px; }
.i-box { width: 18px; height: 17px; margin-right: 13px; }
.i-wifi { width: 20px; height: 16px; margin-right: 12px; }
.i-en { width: 20px; height: 20px; border-radius: 2px; background: #dfdbd2; color: #45433c; text-align: center; font-size: 13px; font-weight: 600; margin-right: 11px; }
.i-bt { width: 10px; height: 16px; margin-right: 13px; }
.i-bat { width: 24px; height: 14px; margin-right: 4px; }
.t-bat { width: 73px; margin-right: 11px; letter-spacing: 0; white-space: nowrap; }
.i-vol { width: 20px; height: 16px; margin-right: 13px; }
.t-time { width: 36px; margin-right: 13px; }
.i-gear { width: 16px; height: 16px; }

.window { position: absolute; overflow: hidden; }
.titlebar { display: flex; align-items: center; gap: 4px; font-weight: 700; color: #827f77; height: 30px; padding-left: 8px; flex: none; }
.titlebar span { margin-left: 8px; letter-spacing: .3px; }
.wb { width: 15px; height: 15px; border-radius: 50%; background: #62605a; color: #3c3b37; display: grid; place-items: center; font: 14px/13px "DejaVu Sans", sans-serif; }
.wb.sq::before { content: ""; width: 7px; height: 6px; border: 1px solid #35342f; }
.wb.mn::before { content: ""; width: 7px; height: 1px; background: #35342f; }
.wb.hot { background: #e8552c; color: #451708; }

.owncloud { left: 0; top: 24px; width: 960px; height: 40px; background: linear-gradient(#3e3d39, #3b3a36); display: flex; flex-direction: column; }
.owncloud .titlebar { height: 28px; padding-top: 1px; }
.progress { height: 12px; background: linear-gradient(90deg, #2f84c0 146px, #f1f0ee 146px); }

.files { width: 960px; display: flex; flex-direction: column; background: #3c3b37; }
.left-files { left: 0; top: 54px; height: 1026px; border-radius: 6px 6px 0 0; }
.right-files { left: 960px; top: 24px; height: 1056px; box-shadow: -4px 0 16px rgba(0,0,0,.5); }
.bar { display: flex; height: 41px; flex: none; padding: 3px 8px 6px; color: #b5b2aa; }
.group { display: flex; height: 33px; border: 1px solid #484742; border-radius: 5px; }
.group button { display: flex; align-items: center; justify-content: center; flex: none; white-space: nowrap; }
.group button + button { border-left: 1px solid #55534d; }
.group .on { background: #474640; box-shadow: inset 0 0 2px #22211e; font-weight: 700; letter-spacing: .3px; }
.group svg { width: 16px; height: 16px; }
.path button { padding-top: 1px; }
.nav { width: 64px; margin-right: 10px; }
.nav button { width: 31px; }
.nav .dim { color: #85827b; border-left-color: #474540 !important; }
.lp { width: 313px; letter-spacing: .25px; }
.lp button:nth-child(1) { width: 75px; gap: 2px; padding-right: 2px; }
.lp button:nth-child(2) { width: 88px; padding-right: 2px; }
.lp button:nth-child(3) { width: 148px; }
.rp { width: 645px; letter-spacing: .3px; }
.rp button:nth-child(1) { width: 27px; }
.rp button:nth-child(2) { width: 251px; letter-spacing: .52px; }
.rp button:nth-child(3) { width: 96px; }
.rp button:nth-child(4) { width: 83px; }
.rp button:nth-child(5) { width: 159px; }
.rp button:nth-child(6) { width: 27px; border-left: 0; }
.find { width: 32px; margin-left: auto; margin-right: 9px; }
.find button { width: 30px; }
.views { width: 65px; }
.views button { width: 32px; }
.body { flex: 1; display: flex; background: #f2f1ef; min-height: 0; }
.places { width: 242px; border: 1px solid #c1bdb8; border-width: 1px 1px 0; border-right-color: #b5b1ab; padding-top: 3px; color: #6b6b67; margin-right: 6px; flex: none; letter-spacing: .25px; }
.places a { display: flex; height: 30px; align-items: center; padding-left: 10px; gap: 10px; }
.places svg { width: 16px; height: 16px; }
.places hr { border: 0; border-top: 1px solid #d9d7d3; box-shadow: 0 1px #fff; margin: 4px 0 5px; }
.places .eject { width: 28px; height: 26px; border: 1px solid #b9b6b0; border-radius: 4px; background: #f8f8f7; margin-left: auto; margin-right: 1px; display: grid; place-items: center; }
.places .eject svg { width: 13px; height: 11px; }
.list { flex: 1; background: #fff; min-width: 0; position: relative; }
.row { display: grid; grid-template-columns: 262px 89px 106px 94px 1fr; height: 32px; border-bottom: 1px solid #ededeb; align-items: center; white-space: nowrap; }
.row span { padding-left: 7px; overflow: hidden; height: 31px; display: flex; align-items: center; letter-spacing: .3px; }
.row span:nth-child(2) { justify-content: flex-end; padding-right: 5px; word-spacing: -1px; letter-spacing: .1px; }
.row span:nth-child(4) { letter-spacing: 0; }
.row span:first-child { padding-left: 3px; }
.row i { width: 8px; }
.row .exp::before { content: ""; display: block; width: 0; border: 4px solid transparent; border-left: 5px solid #333; }
.row svg { width: 30px; height: 28px; margin-right: 6px; }
.right-files .row svg { height: 30px; }
.right-files .row em { letter-spacing: .25px; }
.row.head { height: 28px; background: linear-gradient(#fcfcfc, #f5f5f4); border-bottom-color: #cfccc8; color: #6f6f6b; }
.row.head span, .row.head span:nth-child(n) { height: 27px; padding: 0 8px 0 6px; justify-content: space-between; letter-spacing: .25px; }
.row.head span + span { border-left: 1px solid #cfccc8; }
.sort { width: 0 !important; border: 5px solid transparent; border-top: 0; border-bottom-color: #6b6b67; }
.row.sel { height: 31px; background: linear-gradient(#e66f3e, #f37e51); color: #fff; border: 0; }
.row.idle { background: #e0deda; border: 0; height: 31px; }
.list footer { position: absolute; right: 0; bottom: 3px; padding-right: 17px; color: #6b6b67; letter-spacing: .28px; }

.qgis { left: 461px; top: 268px; width: 1082px; height: 649px; background: #f2f1ef; border-radius: 6px 6px 0 0; display: flex; flex-direction: column; box-shadow: 0 10px 40px 4px rgba(0,0,0,.42), 0 8px 18px 3px rgba(0,0,0,.4); }
.qgis .titlebar { height: 28px; background: linear-gradient(#5a574d, #403f3a); color: #dfdbd2; padding-left: 8px; }
.qgis .titlebar span { letter-spacing: .5px; }
.qgis .titlebar .mn, .qgis .titlebar .sq { background: #7b7970; }
.tools { display: grid; justify-items: end; align-items: center; justify-content: start; }
.tools svg { width: 24px; height: 24px; }
.row1 { height: 40px; grid-template-columns: 8px 32px 9px 33px 36px 37px 37px 20px 35px 37px 35px 36px 36px 36px 16px 33px 36px 36px 37px 35px 36px 16px 33px 36px 41px 31px 36px 36px 36px 48px 11px 33px 17px 11px 33px; }
.row2 { height: 40px; grid-template-columns: 8px 32px 37px 36px 36px 36px 36px 36px 36px 16px 33px 16px 33px; }
svg.drop { width: 8px !important; height: 6px !important; }
svg.more { width: 9px !important; height: 8px !important; }
.grip { width: 4px; height: 9px; background: repeating-linear-gradient(#c4c2be 0 1px, transparent 1px 4px); }
.hgrip { display: block; width: 9px; height: 4px; margin-left: 31px; background: repeating-linear-gradient(90deg, #c4c2be 0 1px, transparent 1px 4px); }
.pressed { width: 34px; height: 34px; border: 1px solid #b3b0aa; border-radius: 4px; background: linear-gradient(#dcdbd8, #ebeae8); display: grid; place-items: center; }
.work { height: 508px; display: flex; }
.side { width: 60px; padding-top: 4px; flex: none; }
.side div { height: 36px; display: flex; align-items: center; padding-left: 8px; gap: 13px; }
.side .hgrip:first-child { margin-bottom: 3px; }
.side .hgrip:last-child { margin-top: 6px; }
.side svg { width: 24px; height: 24px; }
.panel { width: 216px; display: flex; flex-direction: column; flex: none; }
.ptitle { display: flex; height: 26px; align-items: center; padding-left: 2px; }
.ptitle span { margin-right: auto; letter-spacing: .1px; }
.ptitle svg { width: 12px; height: 12px; margin-left: 5px; }
.ptitle svg:last-child { margin-right: 2px; }
.ptools { display: grid; grid-template-columns: 24px 28px 27px 8px 27px 29px 19px 28px 24px; justify-items: end; align-items: center; height: 31px; }
.ptools svg { width: 16px; height: 16px; }
.tree { flex: 1; background: #fff; border: 1px solid #b9b6b0; color: #3c3c3c; }
.lay, .cls, .frp { display: flex; height: 22px; align-items: center; position: relative; white-space: nowrap; }
.lay { padding-left: 25px; color: #000; }
.lay b { letter-spacing: .3px; }
.ck { width: 17px; height: 16px; }
.sw { width: 16px; height: 16px; border: 1px solid #555; margin: 0 6px 0 7px; background: #fff; flex: none; }
.olive { background: #848263; }
.sw3 { width: 16px; height: 16px; margin: 0 6px 0 7px; }
.act { background: #f17b4b; color: #fff; }
.act b { letter-spacing: .5px; }
.open { position: absolute; left: 8px; top: 7px; border: 4px solid transparent; border-top: 7px solid #4a2a1c; border-bottom: 0; }
.frp { padding-left: 43px; height: 20px; }
.cls { padding-left: 45px; }
.cls i { width: 12px; height: 12px; border-radius: 50%; margin: 0 14px 0 11px; }
.c1 { background: #f0e3cb; } .c2 { background: #fdcc8a; } .c3 { background: #fc8d59; } .c4 { background: #e34a33; } .c5 { background: #b30000; }
.split { width: 7px; display: grid; place-items: center; flex: none; }
.map { width: 798px; height: 507px; margin-top: 1px; overflow: hidden; background: #9a7e70; }
.road { fill: none; stroke: #704c50; stroke-opacity: .5; stroke-width: 1px; vector-effect: non-scaling-stroke; }
.halo text { font: 12px "Liberation Sans", sans-serif; fill: #000; stroke: #fff; stroke-width: 2.500px; paint-order: stroke; }

.status { height: 33px; border-top: 1px solid #c8c5c0; display: flex; align-items: center; white-space: nowrap; }
.clip { overflow: hidden; display: flex; justify-content: center; letter-spacing: .2px; }
.co { width: 46px; margin: 0 5px; }
.field { height: 25px; border: 1px solid #aaa7a1; border-radius: 3px; background: #fff; display: flex; align-items: center; padding-left: 6px; flex: none; letter-spacing: .1px; }
.field i { margin-left: auto; height: 100%; background: #f6f5f4; border-left: 1px solid #ccc; display: grid; place-items: center; }
.pos { width: 231px; padding: 0; justify-content: center; margin-right: 5px; letter-spacing: .35px; }
.mouse { width: 15px; height: 16px; margin-right: 14px; }
.sc { width: 40px; letter-spacing: .2px; }
.combo { width: 116px; margin-right: 5px; }
.combo i { width: 25px; }
.lock { width: 14px; height: 16px; margin-right: 13px; }
.ma { width: 37px; margin-right: 4px; }
.spin { width: 89px; }
.spin i { width: 15px; align-content: space-around; }
.spin i::before, .spin i::after { content: ""; border: 3px solid transparent; border-top: 0; border-bottom: 3px solid #777; }
.spin i::after { transform: rotate(180deg); }
.ro { width: 29px; margin: 0 9px 0 12px; }
.status .ck { margin-left: 11px; margin-right: 5px; }
.re { width: 66px; letter-spacing: .2px; }
.crs { width: 16px; height: 16px; margin-right: 4px; }
.ep { width: 134px; letter-spacing: .35px; }
.msg { width: 16px; height: 16px; }
```
FILE: map.js
```js
// Colour code of every raster cell, one string per grid row.
const rows = [
  "bPgGGggGGGBSkkobbnpPPtPtrrPttptopprt",
  "PPguGgkuGGGskgbbpPPPPPntpbrtbtprpptt",
  "PPtgGgguGBgggkbpPtPPpptktknpPpPtptpr",
  "PPPuuggmGBmmmmmbpPPPppPkkpPtPPppppnb",
  "bpptggSSkmGgmmmkbnPPpbpknppPptpPtptr",
  "bbbggSSkkmGmgggkbknPPppbpbkmbkpPpptr",
  "npnbggSkdmSsmgmsoPPPPknkokbkptPptprt",
  "ntpkmgssdkmskuugotPPbkkkbkbpbPptprbb",
  "bnnbpbggkdkdkgmSkbbttbkbbbkpbptPPptb",
  "bbponpgsddokdkgSskbbbbbbbbkbbbpPbbbb",
  "nnbnnnngkdkdkgkSkkbbbbbbbbkbbpPpbpbn",
  "bbnbbbnskkddskbkkskkbbbbbbbbbpbpbbbb",
  "bbpbbonkkkkdkkkkkkkobbbbbnbbpnbbpbbb",
  "bbbbbbbnkkkokbbkkkknkbbbbpnbbPbnbbbb",
  "bbnnbbbbbkkobkkkmkLLppPPpbbpnbpbbpbb",
  "nbbbbbbnbbkkkkkkkkLLkPPPpbbbpbbbbbbb",
  "nttbtrntnnkokkkkpPkskpppppbppbbbbbpp",
  "tnntPPppPpkkkkkkPPPkkppprbpbpppbPpbp",
  "bbnnbpPPPPmkkkkkkkmkbpbbrpbPpbbntbpb",
  "bntnbpPPPPoookkkkbmkmpppbpPppprrprkb",
  "bnttnnPPPnnokkkkbbmkttnbpbbppbpbpbbp"
];
const tone = {
  P: [170, 139, 125], p: [163, 131, 117], r: [159, 125, 112], b: [153, 126, 112],
  n: [155, 130, 113], t: [162, 136, 116], k: [138, 122, 108], g: [147, 140, 130],
  G: [155, 155, 153], B: [154, 164, 164], m: [145, 133, 126], s: [131, 127, 115],
  S: [142, 146, 136], d: [130, 116, 103], o: [143, 123, 102], u: [152, 143, 140], L: [176, 157, 147]
};
const ns = "http://www.w3.org/2000/svg";
function add(parent, tag, attrs) {
  const el = document.createElementNS(ns, tag);
  for (const k in attrs) el.setAttribute(k, attrs[k]);
  parent.appendChild(el);
}
const colX = (c, r) => 747.9 + 23.5 * (c - 1) - 0.6 * r;
const rowY = (r, x) => 393.3 + 25.23 * (r - 1) - 0.0033 * (x - 743);
const cells = document.getElementById("cells");
const lines = document.getElementById("lines");
let thin = "", wide = "";
rows.forEach((codes, r) => {
  for (let c = 0; c < 36; c++) {
    const x = colX(c, r), y = rowY(r, x);
    const j = ((c * 37 + r * 61 + c * r * 13) % 9) - 4;
    const rgb = (tone[codes[c]] || tone.b).map(v => v + j);
    add(cells, "rect", { x: x, y: y, width: 24, height: 25.7, fill: "rgb(" + rgb + ")" });
    thin += `M${x} ${y}v25.23`;
    if ((c + r) % 3) wide += `M${x + 0.4} ${y}v25.23`;
  }
  wide += `M740 ${rowY(r, 740)}L1545 ${rowY(r, 1545)}`;
  thin += `M740 ${rowY(r, 740)}L1545 ${rowY(r, 1545)}`;
});
add(lines, "path", { d: wide, stroke: "#000", "stroke-opacity": 0.5, "stroke-width": 2.1, fill: "none" });
add(lines, "path", { d: thin, stroke: "#0a0a0a", "stroke-width": 1.15, fill: "none" });

// Fire hotspots, graded by radiative power.
const power = { l: "#a5836a", t: "#a87b4c", o: "#a8552f", r: "#9c3b26", d: "#7d1a12" };
const spots = [
  ["l", 448, 207], ["t", 482, 122], ["t", 493, 177], ["d", 545, 195], ["t", 553, 155], ["t", 549, 175], ["o", 506, 138], ["o", 514, 145],
  ["r", 679, 191], ["l", 706, 203], ["o", 712, 225], ["o", 723, 232], ["r", 710, 235], ["r", 720, 247], ["o", 685, 257], ["o", 681, 302], ["r", 700, 288], ["d", 688, 293],
  ["t", 750, 272], ["r", 742, 285], ["r", 752, 290], ["o", 757, 345], ["t", 757, 322], ["t", 775, 340],
  ["o", 889, 603], ["r", 894, 595], ["t", 908, 624], ["t", 950, 655], ["d", 940, 672], ["d", 967, 664], ["r", 985, 733], ["r", 982, 712], ["o", 968, 680], ["o", 979, 695], ["o", 972, 702],
  ["l", 1010, 760], ["l", 1018, 800], ["l", 1020, 830], ["o", 1016, 858], ["l", 1028, 900], ["r", 1014, 915], ["r", 1010, 932],
  ["t", 1035, 955], ["t", 1026, 970], ["d", 1012, 965], ["d", 1005, 988], ["r", 994, 993],
  ["r", 1039, 1208], ["o", 1054, 1208], ["t", 1053, 1182], ["o", 1030, 1230], ["t", 1042, 1235], ["r", 1020, 1255], ["r", 1013, 1282], ["t", 1018, 1297], ["o", 1004, 1315], ["o", 1007, 1335],
  ["d", 988, 1392], ["d", 1000, 1406], ["o", 987, 1375], ["r", 1018, 1425], ["r", 1008, 1440], ["r", 1004, 1465], ["r", 997, 1492], ["l", 1021, 1458], ["o", 986, 1518]
];
const layer = document.getElementById("spots");
for (const [kind, x, y] of spots) add(layer, "ellipse", { cx: x, cy: y, rx: 10.4, ry: 16, fill: power[kind], opacity: 0.95 });
add(layer, "path", { d: "M984 730L994 760 1001 790 1007 815 1003 832 997 815 993 775z", fill: power.r });
add(layer, "path", { d: "M1010 860l8 10-2 50h-10z", fill: power.r });
```
